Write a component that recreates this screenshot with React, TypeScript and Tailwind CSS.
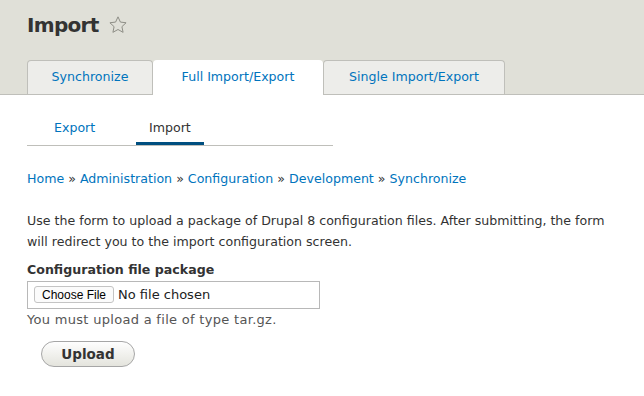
// Import configuration page (Drupal Seven style)

const font = { fontFamily: '"DejaVu Sans", Verdana, sans-serif' };

function StarIcon() {
  return (
    <svg width="20" height="20" viewBox="0 0 24 24" fill="none" stroke="#8e8e86" strokeWidth="1.2" strokeLinejoin="round">
      <path d="M12 2.2l2.9 6.3 6.8.8-5 4.7 1.4 6.8L12 17.4l-6.1 3.4 1.4-6.8-5-4.7 6.8-.8z" />
    </svg>
  );
}

function PrimaryTab({ label, active }: { label: string; active?: boolean }) {
  if (active) {
    return (
      <a className="-mb-px flex h-[35px] w-[170px] items-center justify-center rounded-t-[4px] bg-white text-[12.6px] text-[#0074bd]">
        {label}
      </a>
    );
  }
  return (
    <a className="flex h-[34px] items-center justify-center rounded-t-[4px] border border-b-0 border-[#bfbfba] bg-[#ededea] text-[12.6px] text-[#0074bd]">
      {label}
    </a>
  );
}

export default function App() {
  return (
    <div className="min-h-[396px] w-[644px] bg-white text-[#333]" style={font}>
      <header className="border-b border-[#bfbfba] bg-[#e0e0d8] pl-[27px]">
        <div className="flex h-[50px] items-center gap-[9px]">
          <h1 className="text-[20px] font-bold leading-none tracking-[-0.7px] text-[#333]">Import</h1>
          <StarIcon />
        </div>
        <nav className="mt-[10px] flex items-end">
          <div className="w-[126px]">
            <PrimaryTab label="Synchronize" />
          </div>
          <PrimaryTab label="Full Import/Export" active />
          <div className="w-[182px]">
            <PrimaryTab label="Single Import/Export" />
          </div>
        </nav>
      </header>

      <main className="px-[27px]">
        <nav className="mt-[17px] flex w-[306px] border-b border-[#bfbfba] text-[12.6px]">
          <a className="flex h-[33px] w-[109px] items-center pl-[27px] text-[#0074bd]">Export</a>
          <a className="-mb-px flex h-[33px] w-[68px] items-center border-b-[3px] border-[#004f80] pl-[13px] pt-[3px] text-[#333]">
            Import
          </a>
        </nav>

        <div className="mt-[24px] text-[12.6px] text-[#0074bd]">
          <a>Home</a> <span className="text-[#333]">»</span> <a>Administration</a>{' '}
          <span className="text-[#333]">»</span> <a>Configuration</a> <span className="text-[#333]">»</span>{' '}
          <a>Development</a> <span className="text-[#333]">»</span> <a>Synchronize</a>
        </div>

        <p className="mt-[21px] text-[12.6px] leading-[21px]">
          Use the form to upload a package of Drupal 8 configuration files. After submitting, the form
          <br />
          will redirect you to the import configuration screen.
        </p>

        <form className="mt-[10px]">
          <label className="block text-[12.6px] font-bold leading-[16px]">Configuration file package</label>
          <div className="mt-[3px] flex h-[28px] w-[293px] items-center border border-[#b8b8b8] bg-white pl-[6px]">
            <span
              className="flex h-[17px] items-center rounded-[3px] border border-[#c4c4c4] bg-[#fbfbfb] px-[7px] text-[12px] text-black"
              style={{ fontFamily: '"Liberation Sans", Arial, sans-serif' }}
            >
              Choose File
            </span>
            <span className="ml-[4px] text-[13px] text-[#222]">No file chosen</span>
          </div>
          <div className="mt-[1px] text-[13px] tracking-[0.3px] text-[#555]">You must upload a file of type tar.gz.</div>
          <button
            type="button"
            className="ml-[14px] mt-[12px] flex h-[26px] w-[94px] items-center justify-center rounded-full border border-[#a6a6a6] bg-gradient-to-b from-[#fefefe] to-[#e4e4dd] text-[13.5px] font-bold text-[#333]"
          >
            Upload
          </button>
        </form>
      </main>
    </div>
  );
}
